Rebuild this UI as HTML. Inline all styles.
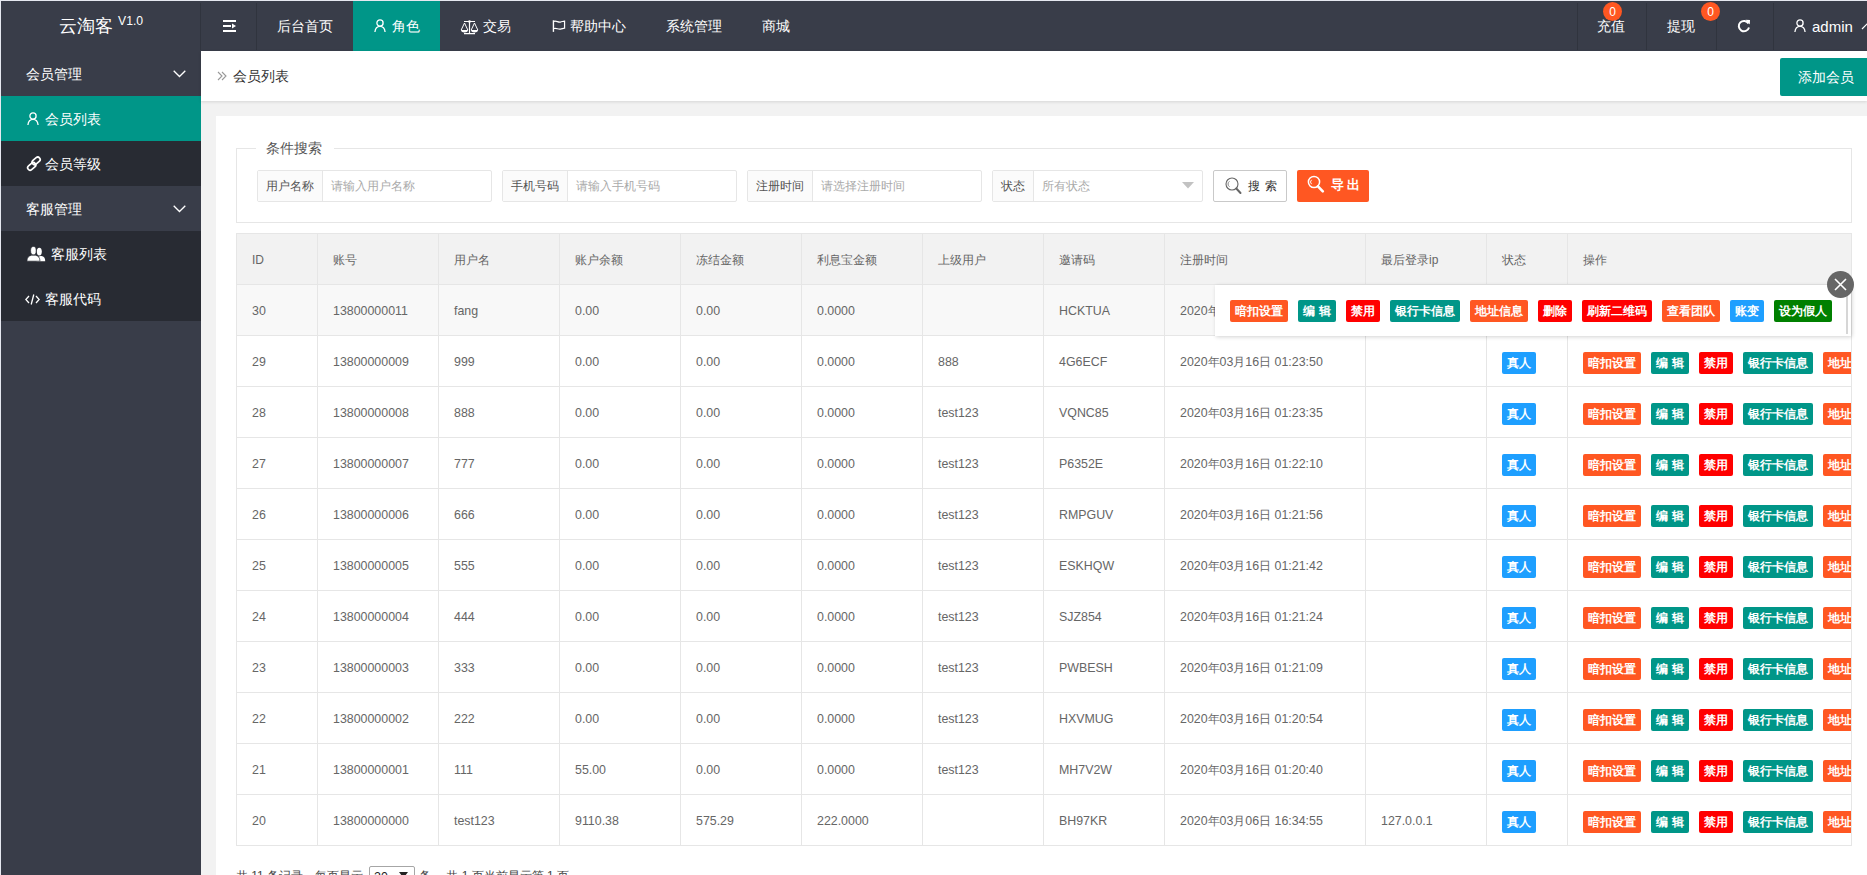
<!DOCTYPE html><html><head><meta charset="utf-8"><style>
*{margin:0;padding:0;box-sizing:border-box}
html,body{width:1867px;height:875px;overflow:hidden}
body{background:#e6e8f0;font-family:"Liberation Sans", sans-serif;position:relative}
.a{position:absolute}
svg{display:block}
.t{position:absolute;white-space:nowrap;line-height:1}
#hdr{left:1px;top:1px;width:1866px;height:50px;background:#393D49}
#side{left:1px;top:51px;width:200px;height:824px;background:#393D49}
#main{left:201px;top:51px;width:1666px;height:824px;background:#f2f2f2}
.sep{position:absolute;top:2px;width:1px;height:47px;background:#30343e}
.nav{color:#fff;font-size:14px}
.sideitem{position:absolute;left:0;width:200px;height:45px}
.btn{position:absolute;height:22px;line-height:22px;font-size:12px;font-weight:bold;color:#fff;border-radius:2px;text-align:center;white-space:nowrap}
.cell{position:absolute;font-size:12.4px;color:#666;white-space:nowrap;line-height:1}
</style></head><body><div id="hdr" class="a">
<div class="t" style="left:58px;top:16px;color:#fff;font-size:18px">云淘客</div>
<div class="t" style="left:117px;top:14px;color:#fff;font-size:12.2px">V1.0</div>
<div class="sep" style="left:199px"></div><div class="sep" style="left:255px"></div>
<svg class="a" style="left:221px;top:18px" width="16" height="14" viewBox="0 0 16 14"><rect x="1" y="1" width="13" height="2" fill="#fff"/><rect x="1" y="6" width="8" height="2" fill="#fff"/><path d="M10 4.5 L14 7 L10 9.5Z" fill="#fff"/><rect x="1" y="11" width="13" height="2" fill="#fff"/></svg>
<div class="t nav" style="left:276px;top:18px">后台首页</div>
<div class="a" style="left:352px;top:0;width:87px;height:50px;background:#009688"></div>
<div class="a" style="left:373px;top:18px"><svg width="12" height="13" viewBox="0 0 12 13"><circle cx="6" cy="4" r="3.1" fill="none" stroke="#fff" stroke-width="1.3"/><path d="M0.9 13 C1.3 9.3 3.3 7.4 6 7.4 C8.7 7.4 10.7 9.3 11.1 13" fill="none" stroke="#fff" stroke-width="1.3"/></svg></div>
<div class="t nav" style="left:391px;top:18px">角色</div>
<svg class="a" style="left:459px;top:19px" width="19" height="15" viewBox="0 0 19 15"><path d="M4 1.5 H15 M9.5 1.5 V13.6 M4 13.6 H15" stroke="#fff" stroke-width="1.2" fill="none"/><circle cx="9.5" cy="1.5" r="1.3" fill="#fff"/><path d="M4.5 3 L1.2 10 M4.5 3 L7.8 10 M14.5 3 L11.2 10 M14.5 3 L17.8 10" stroke="#fff" stroke-width="1" fill="none"/><path d="M1 10 A3.5 2.4 0 0 0 8 10 Z M11 10 A3.5 2.4 0 0 0 18 10 Z" fill="#fff"/></svg>
<div class="t nav" style="left:482px;top:18px">交易</div>
<svg class="a" style="left:550px;top:19px" width="16" height="13" viewBox="0 0 16 14"><path d="M2 0.3 V12.8" stroke="#fff" stroke-width="1.5"/><path d="M2.5 1.5 C5 0.5 7 2.8 9.5 2.2 C11.5 1.8 13 1.2 14 1.2 V8.8 C13 8.8 11.5 9.4 9.5 9.8 C7 10.3 5 8.2 2.5 9.2" stroke="#fff" stroke-width="1.3" fill="none"/></svg>
<div class="t nav" style="left:569px;top:18px">帮助中心</div>
<div class="t nav" style="left:665px;top:18px">系统管理</div>
<div class="t nav" style="left:761px;top:18px">商城</div>
<div class="sep" style="left:1576px"></div>
<div class="sep" style="left:1645px"></div>
<div class="sep" style="left:1715px"></div>
<div class="sep" style="left:1772px"></div>
<div class="t nav" style="left:1596px;top:18px">充值</div>
<div class="a" style="left:1602px;top:1px;width:19px;height:19px;border-radius:50%;background:#FF5722;color:#fff;font-size:12px;line-height:21px;text-align:center">0</div>
<div class="t nav" style="left:1666px;top:18px">提现</div>
<div class="a" style="left:1700px;top:1px;width:19px;height:19px;border-radius:50%;background:#FF5722;color:#fff;font-size:12px;line-height:21px;text-align:center">0</div>
<svg class="a" style="left:1736px;top:18px" width="14" height="14" viewBox="0 0 14 14"><path d="M11.5 4.5 A5.2 5.2 0 1 0 12 8.5" stroke="#fff" stroke-width="2" fill="none"/><path d="M8.5 0.8 L13 1 L12.8 5.5 Z" fill="#fff"/></svg>
<div class="a" style="left:1793px;top:18px"><svg width="12" height="13" viewBox="0 0 12 13"><circle cx="6" cy="4" r="3.1" fill="none" stroke="#fff" stroke-width="1.3"/><path d="M0.9 13 C1.3 9.3 3.3 7.4 6 7.4 C8.7 7.4 10.7 9.3 11.1 13" fill="none" stroke="#fff" stroke-width="1.3"/></svg></div>
<div class="t nav" style="left:1811px;top:18px;font-size:15px">admin</div>
<svg class="a" style="left:1860px;top:21px" width="12" height="8" viewBox="0 0 12 8"><path d="M1 7 L6 2 L11 7" stroke="#fff" stroke-width="1.2" fill="none"/></svg>
</div>
<div id="side" class="a">
<div class="sideitem" style="top:0"><div class="t nav" style="left:25px;top:16px">会员管理</div><div class="a" style="left:172px;top:19px"><svg width="13" height="8" viewBox="0 0 13 8"><path d="M0.7 0.7 L6.5 6.5 L12.3 0.7" stroke="#fff" stroke-width="1.3" fill="none"/></svg></div></div>
<div class="sideitem" style="top:45px;background:#009688"><div class="a" style="left:26px;top:16px"><svg width="12" height="13" viewBox="0 0 12 13"><circle cx="6" cy="4" r="3.1" fill="none" stroke="#fff" stroke-width="1.3"/><path d="M0.9 13 C1.3 9.3 3.3 7.4 6 7.4 C8.7 7.4 10.7 9.3 11.1 13" fill="none" stroke="#fff" stroke-width="1.3"/></svg></div><div class="t nav" style="left:44px;top:16px">会员列表</div></div>
<div class="sideitem" style="top:90px;background:#282B33"><div class="a" style="left:25px;top:105px;top:15px"><svg width="16" height="16" viewBox="0 0 16 16"><g transform="rotate(-40 10.1 4.9)"><rect x="5.6" y="2.5" width="9" height="4.8" rx="2.4" stroke="#fff" stroke-width="1.7" fill="none"/></g><g transform="rotate(-40 5.7 10.4)"><rect x="1.2" y="8" width="9" height="4.8" rx="2.4" stroke="#fff" stroke-width="1.7" fill="none"/></g></svg></div><div class="t nav" style="left:44px;top:16px">会员等级</div></div>
<div class="sideitem" style="top:135px"><div class="t nav" style="left:25px;top:16px">客服管理</div><div class="a" style="left:172px;top:19px"><svg width="13" height="8" viewBox="0 0 13 8"><path d="M0.7 0.7 L6.5 6.5 L12.3 0.7" stroke="#fff" stroke-width="1.3" fill="none"/></svg></div></div>
<div class="sideitem" style="top:180px;background:#282B33"><div class="a" style="left:25px;top:15px"><svg width="20" height="16" viewBox="0 0 20 16"><ellipse cx="13.3" cy="5.6" rx="2.5" ry="3.9" fill="#fff"/><path d="M10.5 15.2 C11 11.8 12.3 10.3 14.5 10 L15.5 10 C18 10.4 19.2 12 19.2 15.2Z" fill="#fff"/><ellipse cx="7.4" cy="4.7" rx="2.8" ry="4.2" stroke="#282B33" stroke-width="0.7" fill="#fff"/><path d="M0.9 15.2 C0.9 11.5 2.8 9.8 5.5 9.2 L9.5 9.2 C12.2 9.8 14 11.5 14 15.2Z" stroke="#282B33" stroke-width="0.7" fill="#fff"/></svg></div><div class="t nav" style="left:50px;top:16px">客服列表</div></div>
<div class="sideitem" style="top:225px;background:#282B33"><div class="a" style="left:24px;top:18px"><svg width="15" height="11" viewBox="0 0 15 11"><path d="M4 2 L0.8 5.5 L4 9 M11 2 L14.2 5.5 L11 9 M8.8 0.5 L6.2 10.5" stroke="#fff" stroke-width="1.3" fill="none"/></svg></div><div class="t nav" style="left:44px;top:16px">客服代码</div></div>
</div>
<div id="main" class="a">
<div class="a" style="left:0;top:0;width:1666px;height:50px;background:#fff;box-shadow:0 1px 3px rgba(0,0,0,.12)"></div>
<svg class="a" style="left:16px;top:20px" width="10" height="10" viewBox="0 0 10 10"><path d="M1 1 L5 5 L1 9 M5 1 L9 5 L5 9" stroke="#999" stroke-width="1.1" fill="none"/></svg>
<div class="t" style="left:32px;top:18px;font-size:14px;color:#333">会员列表</div>
<div class="a" style="left:1579px;top:7px;width:95px;height:38px;background:#009688;border-radius:2px"></div>
<div class="t" style="left:1597px;top:19px;font-size:14px;color:#fff">添加会员</div>
<div class="a" style="left:15px;top:65px;width:1670px;height:800px;background:#fff"></div>
</div>
<div class="a" style="left:236px;top:148px;width:1616px;height:75px;border:1px solid #e6e6e6"></div>
<div class="a" style="left:256px;top:140px;width:78px;height:16px;background:#fff"></div>
<div class="t" style="left:266px;top:141px;font-size:14px;color:#555">条件搜索</div>
<div class="a" style="left:257px;top:170px;width:235px;height:32px;border:1px solid #e6e6e6;border-radius:2px;background:#fff"></div><div class="a" style="left:258px;top:171px;width:65px;height:30px;background:#FBFBFB;border-right:1px solid #e6e6e6"></div><div class="t" style="left:266px;top:180px;font-size:12px;color:#555">用户名称</div><div class="t" style="left:331px;top:180px;font-size:12px;color:#aaa">请输入用户名称</div>
<div class="a" style="left:502px;top:170px;width:235px;height:32px;border:1px solid #e6e6e6;border-radius:2px;background:#fff"></div><div class="a" style="left:503px;top:171px;width:65px;height:30px;background:#FBFBFB;border-right:1px solid #e6e6e6"></div><div class="t" style="left:511px;top:180px;font-size:12px;color:#555">手机号码</div><div class="t" style="left:576px;top:180px;font-size:12px;color:#aaa">请输入手机号码</div>
<div class="a" style="left:747px;top:170px;width:235px;height:32px;border:1px solid #e6e6e6;border-radius:2px;background:#fff"></div><div class="a" style="left:748px;top:171px;width:65px;height:30px;background:#FBFBFB;border-right:1px solid #e6e6e6"></div><div class="t" style="left:756px;top:180px;font-size:12px;color:#555">注册时间</div><div class="t" style="left:821px;top:180px;font-size:12px;color:#aaa">请选择注册时间</div>
<div class="a" style="left:992px;top:170px;width:211px;height:32px;border:1px solid #e6e6e6;border-radius:2px;background:#fff"></div><div class="a" style="left:993px;top:171px;width:41px;height:30px;background:#FBFBFB;border-right:1px solid #e6e6e6"></div><div class="t" style="left:1001px;top:180px;font-size:12px;color:#555">状态</div><div class="t" style="left:1042px;top:180px;font-size:12px;color:#aaa">所有状态</div><svg class="a" style="left:1182px;top:182px" width="12" height="7" viewBox="0 0 12 7"><path d="M0 0 H12 L6 6.5Z" fill="#c2c2c2"/></svg>
<div class="a" style="left:1213px;top:170px;width:74px;height:32px;border:1px solid #C9C9C9;border-radius:2px;background:#fff"></div>
<svg class="a" style="left:1225px;top:177px" width="17" height="18" viewBox="0 0 17 18"><circle cx="7" cy="7" r="6" stroke="#666" stroke-width="1.1" fill="none"/><path d="M11.3 11.5 L15.5 16" stroke="#666" stroke-width="2" stroke-linecap="round"/><path d="M4.5 4.3 A3.2 3.2 0 0 0 4.5 9.7" stroke="#666" stroke-width="0.8" fill="none"/></svg>
<div class="t" style="left:1248px;top:180px;font-size:12px;color:#333;letter-spacing:5px">搜索</div>
<div class="a" style="left:1297px;top:170px;width:72px;height:32px;background:#FF5722;border-radius:2px"></div>
<svg class="a" style="left:1307px;top:175px" width="18" height="18" viewBox="0 0 18 18"><circle cx="7" cy="7" r="5.6" stroke="#fff" stroke-width="1.5" fill="none"/><path d="M11 11.3 L15.8 16.3" stroke="#fff" stroke-width="2.6" stroke-linecap="round"/><path d="M4.6 4.8 A3 3 0 0 0 4.6 9.2" stroke="#fff" stroke-width="0.9" fill="none"/></svg>
<div class="t" style="left:1331px;top:178px;font-size:13px;color:#fff;letter-spacing:3px;font-weight:bold">导出</div>
<div class="a" style="left:236px;top:233px;width:1616px;height:613px;overflow:hidden;border:1px solid #e6e6e6;border-bottom:0">
<div class="a" style="left:0;top:0;width:1616px;height:50px;background:#f2f2f2"></div>
<div class="a" style="left:0;top:51px;width:1616px;height:50px;background:#f8f8f8"></div>
<div class="a" style="left:0;top:50px;width:1616px;height:1px;background:#e6e6e6"></div>
<div class="a" style="left:0;top:101px;width:1616px;height:1px;background:#e6e6e6"></div>
<div class="a" style="left:0;top:152px;width:1616px;height:1px;background:#e6e6e6"></div>
<div class="a" style="left:0;top:203px;width:1616px;height:1px;background:#e6e6e6"></div>
<div class="a" style="left:0;top:254px;width:1616px;height:1px;background:#e6e6e6"></div>
<div class="a" style="left:0;top:305px;width:1616px;height:1px;background:#e6e6e6"></div>
<div class="a" style="left:0;top:356px;width:1616px;height:1px;background:#e6e6e6"></div>
<div class="a" style="left:0;top:407px;width:1616px;height:1px;background:#e6e6e6"></div>
<div class="a" style="left:0;top:458px;width:1616px;height:1px;background:#e6e6e6"></div>
<div class="a" style="left:0;top:509px;width:1616px;height:1px;background:#e6e6e6"></div>
<div class="a" style="left:0;top:560px;width:1616px;height:1px;background:#e6e6e6"></div>
<div class="a" style="left:0;top:611px;width:1616px;height:1px;background:#e6e6e6"></div>
<div class="a" style="left:80px;top:0;width:1px;height:612px;background:#e6e6e6"></div>
<div class="a" style="left:201px;top:0;width:1px;height:612px;background:#e6e6e6"></div>
<div class="a" style="left:322px;top:0;width:1px;height:612px;background:#e6e6e6"></div>
<div class="a" style="left:443px;top:0;width:1px;height:612px;background:#e6e6e6"></div>
<div class="a" style="left:564px;top:0;width:1px;height:612px;background:#e6e6e6"></div>
<div class="a" style="left:685px;top:0;width:1px;height:612px;background:#e6e6e6"></div>
<div class="a" style="left:806px;top:0;width:1px;height:612px;background:#e6e6e6"></div>
<div class="a" style="left:927px;top:0;width:1px;height:612px;background:#e6e6e6"></div>
<div class="a" style="left:1128px;top:0;width:1px;height:612px;background:#e6e6e6"></div>
<div class="a" style="left:1249px;top:0;width:1px;height:612px;background:#e6e6e6"></div>
<div class="a" style="left:1330px;top:0;width:1px;height:612px;background:#e6e6e6"></div>
<div class="cell" style="left:15px;top:20px;font-size:12px">ID</div>
<div class="cell" style="left:96px;top:20px;font-size:12px">账号</div>
<div class="cell" style="left:217px;top:20px;font-size:12px">用户名</div>
<div class="cell" style="left:338px;top:20px;font-size:12px">账户余额</div>
<div class="cell" style="left:459px;top:20px;font-size:12px">冻结金额</div>
<div class="cell" style="left:580px;top:20px;font-size:12px">利息宝金额</div>
<div class="cell" style="left:701px;top:20px;font-size:12px">上级用户</div>
<div class="cell" style="left:822px;top:20px;font-size:12px">邀请码</div>
<div class="cell" style="left:943px;top:20px;font-size:12px">注册时间</div>
<div class="cell" style="left:1144px;top:20px;font-size:12px">最后登录ip</div>
<div class="cell" style="left:1265px;top:20px;font-size:12px">状态</div>
<div class="cell" style="left:1346px;top:20px;font-size:12px">操作</div>
<div class="cell" style="left:15px;top:71px">30</div>
<div class="cell" style="left:96px;top:71px">13800000011</div>
<div class="cell" style="left:217px;top:71px">fang</div>
<div class="cell" style="left:338px;top:71px">0.00</div>
<div class="cell" style="left:459px;top:71px">0.00</div>
<div class="cell" style="left:580px;top:71px">0.0000</div>
<div class="cell" style="left:822px;top:71px">HCKTUA</div>
<div class="cell" style="left:943px;top:71px">2020年03月16日 01:23:55</div>
<div class="btn" style="left:1265px;top:67px;width:34px;background:#1E9FFF">真人</div>
<div class="btn" style="left:1346px;top:67px;width:58px;background:#FF5722">暗扣设置</div>
<div class="btn" style="left:1414px;top:67px;width:38px;background:#009688">编 辑</div>
<div class="btn" style="left:1462px;top:67px;width:34px;background:#FF0000">禁用</div>
<div class="btn" style="left:1506px;top:67px;width:70px;background:#009688">银行卡信息</div>
<div class="btn" style="left:1586px;top:67px;width:58px;background:#FF5722">地址信息</div>
<div class="cell" style="left:15px;top:122px">29</div>
<div class="cell" style="left:96px;top:122px">13800000009</div>
<div class="cell" style="left:217px;top:122px">999</div>
<div class="cell" style="left:338px;top:122px">0.00</div>
<div class="cell" style="left:459px;top:122px">0.00</div>
<div class="cell" style="left:580px;top:122px">0.0000</div>
<div class="cell" style="left:701px;top:122px">888</div>
<div class="cell" style="left:822px;top:122px">4G6ECF</div>
<div class="cell" style="left:943px;top:122px">2020年03月16日 01:23:50</div>
<div class="btn" style="left:1265px;top:118px;width:34px;background:#1E9FFF">真人</div>
<div class="btn" style="left:1346px;top:118px;width:58px;background:#FF5722">暗扣设置</div>
<div class="btn" style="left:1414px;top:118px;width:38px;background:#009688">编 辑</div>
<div class="btn" style="left:1462px;top:118px;width:34px;background:#FF0000">禁用</div>
<div class="btn" style="left:1506px;top:118px;width:70px;background:#009688">银行卡信息</div>
<div class="btn" style="left:1586px;top:118px;width:58px;background:#FF5722">地址信息</div>
<div class="cell" style="left:15px;top:173px">28</div>
<div class="cell" style="left:96px;top:173px">13800000008</div>
<div class="cell" style="left:217px;top:173px">888</div>
<div class="cell" style="left:338px;top:173px">0.00</div>
<div class="cell" style="left:459px;top:173px">0.00</div>
<div class="cell" style="left:580px;top:173px">0.0000</div>
<div class="cell" style="left:701px;top:173px">test123</div>
<div class="cell" style="left:822px;top:173px">VQNC85</div>
<div class="cell" style="left:943px;top:173px">2020年03月16日 01:23:35</div>
<div class="btn" style="left:1265px;top:169px;width:34px;background:#1E9FFF">真人</div>
<div class="btn" style="left:1346px;top:169px;width:58px;background:#FF5722">暗扣设置</div>
<div class="btn" style="left:1414px;top:169px;width:38px;background:#009688">编 辑</div>
<div class="btn" style="left:1462px;top:169px;width:34px;background:#FF0000">禁用</div>
<div class="btn" style="left:1506px;top:169px;width:70px;background:#009688">银行卡信息</div>
<div class="btn" style="left:1586px;top:169px;width:58px;background:#FF5722">地址信息</div>
<div class="cell" style="left:15px;top:224px">27</div>
<div class="cell" style="left:96px;top:224px">13800000007</div>
<div class="cell" style="left:217px;top:224px">777</div>
<div class="cell" style="left:338px;top:224px">0.00</div>
<div class="cell" style="left:459px;top:224px">0.00</div>
<div class="cell" style="left:580px;top:224px">0.0000</div>
<div class="cell" style="left:701px;top:224px">test123</div>
<div class="cell" style="left:822px;top:224px">P6352E</div>
<div class="cell" style="left:943px;top:224px">2020年03月16日 01:22:10</div>
<div class="btn" style="left:1265px;top:220px;width:34px;background:#1E9FFF">真人</div>
<div class="btn" style="left:1346px;top:220px;width:58px;background:#FF5722">暗扣设置</div>
<div class="btn" style="left:1414px;top:220px;width:38px;background:#009688">编 辑</div>
<div class="btn" style="left:1462px;top:220px;width:34px;background:#FF0000">禁用</div>
<div class="btn" style="left:1506px;top:220px;width:70px;background:#009688">银行卡信息</div>
<div class="btn" style="left:1586px;top:220px;width:58px;background:#FF5722">地址信息</div>
<div class="cell" style="left:15px;top:275px">26</div>
<div class="cell" style="left:96px;top:275px">13800000006</div>
<div class="cell" style="left:217px;top:275px">666</div>
<div class="cell" style="left:338px;top:275px">0.00</div>
<div class="cell" style="left:459px;top:275px">0.00</div>
<div class="cell" style="left:580px;top:275px">0.0000</div>
<div class="cell" style="left:701px;top:275px">test123</div>
<div class="cell" style="left:822px;top:275px">RMPGUV</div>
<div class="cell" style="left:943px;top:275px">2020年03月16日 01:21:56</div>
<div class="btn" style="left:1265px;top:271px;width:34px;background:#1E9FFF">真人</div>
<div class="btn" style="left:1346px;top:271px;width:58px;background:#FF5722">暗扣设置</div>
<div class="btn" style="left:1414px;top:271px;width:38px;background:#009688">编 辑</div>
<div class="btn" style="left:1462px;top:271px;width:34px;background:#FF0000">禁用</div>
<div class="btn" style="left:1506px;top:271px;width:70px;background:#009688">银行卡信息</div>
<div class="btn" style="left:1586px;top:271px;width:58px;background:#FF5722">地址信息</div>
<div class="cell" style="left:15px;top:326px">25</div>
<div class="cell" style="left:96px;top:326px">13800000005</div>
<div class="cell" style="left:217px;top:326px">555</div>
<div class="cell" style="left:338px;top:326px">0.00</div>
<div class="cell" style="left:459px;top:326px">0.00</div>
<div class="cell" style="left:580px;top:326px">0.0000</div>
<div class="cell" style="left:701px;top:326px">test123</div>
<div class="cell" style="left:822px;top:326px">ESKHQW</div>
<div class="cell" style="left:943px;top:326px">2020年03月16日 01:21:42</div>
<div class="btn" style="left:1265px;top:322px;width:34px;background:#1E9FFF">真人</div>
<div class="btn" style="left:1346px;top:322px;width:58px;background:#FF5722">暗扣设置</div>
<div class="btn" style="left:1414px;top:322px;width:38px;background:#009688">编 辑</div>
<div class="btn" style="left:1462px;top:322px;width:34px;background:#FF0000">禁用</div>
<div class="btn" style="left:1506px;top:322px;width:70px;background:#009688">银行卡信息</div>
<div class="btn" style="left:1586px;top:322px;width:58px;background:#FF5722">地址信息</div>
<div class="cell" style="left:15px;top:377px">24</div>
<div class="cell" style="left:96px;top:377px">13800000004</div>
<div class="cell" style="left:217px;top:377px">444</div>
<div class="cell" style="left:338px;top:377px">0.00</div>
<div class="cell" style="left:459px;top:377px">0.00</div>
<div class="cell" style="left:580px;top:377px">0.0000</div>
<div class="cell" style="left:701px;top:377px">test123</div>
<div class="cell" style="left:822px;top:377px">SJZ854</div>
<div class="cell" style="left:943px;top:377px">2020年03月16日 01:21:24</div>
<div class="btn" style="left:1265px;top:373px;width:34px;background:#1E9FFF">真人</div>
<div class="btn" style="left:1346px;top:373px;width:58px;background:#FF5722">暗扣设置</div>
<div class="btn" style="left:1414px;top:373px;width:38px;background:#009688">编 辑</div>
<div class="btn" style="left:1462px;top:373px;width:34px;background:#FF0000">禁用</div>
<div class="btn" style="left:1506px;top:373px;width:70px;background:#009688">银行卡信息</div>
<div class="btn" style="left:1586px;top:373px;width:58px;background:#FF5722">地址信息</div>
<div class="cell" style="left:15px;top:428px">23</div>
<div class="cell" style="left:96px;top:428px">13800000003</div>
<div class="cell" style="left:217px;top:428px">333</div>
<div class="cell" style="left:338px;top:428px">0.00</div>
<div class="cell" style="left:459px;top:428px">0.00</div>
<div class="cell" style="left:580px;top:428px">0.0000</div>
<div class="cell" style="left:701px;top:428px">test123</div>
<div class="cell" style="left:822px;top:428px">PWBESH</div>
<div class="cell" style="left:943px;top:428px">2020年03月16日 01:21:09</div>
<div class="btn" style="left:1265px;top:424px;width:34px;background:#1E9FFF">真人</div>
<div class="btn" style="left:1346px;top:424px;width:58px;background:#FF5722">暗扣设置</div>
<div class="btn" style="left:1414px;top:424px;width:38px;background:#009688">编 辑</div>
<div class="btn" style="left:1462px;top:424px;width:34px;background:#FF0000">禁用</div>
<div class="btn" style="left:1506px;top:424px;width:70px;background:#009688">银行卡信息</div>
<div class="btn" style="left:1586px;top:424px;width:58px;background:#FF5722">地址信息</div>
<div class="cell" style="left:15px;top:479px">22</div>
<div class="cell" style="left:96px;top:479px">13800000002</div>
<div class="cell" style="left:217px;top:479px">222</div>
<div class="cell" style="left:338px;top:479px">0.00</div>
<div class="cell" style="left:459px;top:479px">0.00</div>
<div class="cell" style="left:580px;top:479px">0.0000</div>
<div class="cell" style="left:701px;top:479px">test123</div>
<div class="cell" style="left:822px;top:479px">HXVMUG</div>
<div class="cell" style="left:943px;top:479px">2020年03月16日 01:20:54</div>
<div class="btn" style="left:1265px;top:475px;width:34px;background:#1E9FFF">真人</div>
<div class="btn" style="left:1346px;top:475px;width:58px;background:#FF5722">暗扣设置</div>
<div class="btn" style="left:1414px;top:475px;width:38px;background:#009688">编 辑</div>
<div class="btn" style="left:1462px;top:475px;width:34px;background:#FF0000">禁用</div>
<div class="btn" style="left:1506px;top:475px;width:70px;background:#009688">银行卡信息</div>
<div class="btn" style="left:1586px;top:475px;width:58px;background:#FF5722">地址信息</div>
<div class="cell" style="left:15px;top:530px">21</div>
<div class="cell" style="left:96px;top:530px">13800000001</div>
<div class="cell" style="left:217px;top:530px">111</div>
<div class="cell" style="left:338px;top:530px">55.00</div>
<div class="cell" style="left:459px;top:530px">0.00</div>
<div class="cell" style="left:580px;top:530px">0.0000</div>
<div class="cell" style="left:701px;top:530px">test123</div>
<div class="cell" style="left:822px;top:530px">MH7V2W</div>
<div class="cell" style="left:943px;top:530px">2020年03月16日 01:20:40</div>
<div class="btn" style="left:1265px;top:526px;width:34px;background:#1E9FFF">真人</div>
<div class="btn" style="left:1346px;top:526px;width:58px;background:#FF5722">暗扣设置</div>
<div class="btn" style="left:1414px;top:526px;width:38px;background:#009688">编 辑</div>
<div class="btn" style="left:1462px;top:526px;width:34px;background:#FF0000">禁用</div>
<div class="btn" style="left:1506px;top:526px;width:70px;background:#009688">银行卡信息</div>
<div class="btn" style="left:1586px;top:526px;width:58px;background:#FF5722">地址信息</div>
<div class="cell" style="left:15px;top:581px">20</div>
<div class="cell" style="left:96px;top:581px">13800000000</div>
<div class="cell" style="left:217px;top:581px">test123</div>
<div class="cell" style="left:338px;top:581px">9110.38</div>
<div class="cell" style="left:459px;top:581px">575.29</div>
<div class="cell" style="left:580px;top:581px">222.0000</div>
<div class="cell" style="left:822px;top:581px">BH97KR</div>
<div class="cell" style="left:943px;top:581px">2020年03月06日 16:34:55</div>
<div class="cell" style="left:1144px;top:581px">127.0.0.1</div>
<div class="btn" style="left:1265px;top:577px;width:34px;background:#1E9FFF">真人</div>
<div class="btn" style="left:1346px;top:577px;width:58px;background:#FF5722">暗扣设置</div>
<div class="btn" style="left:1414px;top:577px;width:38px;background:#009688">编 辑</div>
<div class="btn" style="left:1462px;top:577px;width:34px;background:#FF0000">禁用</div>
<div class="btn" style="left:1506px;top:577px;width:70px;background:#009688">银行卡信息</div>
<div class="btn" style="left:1586px;top:577px;width:58px;background:#FF5722">地址信息</div>
</div>
<div class="a" style="left:1215px;top:285px;width:636px;height:51px;background:#fff;box-shadow:1px 1px 4px rgba(0,0,0,.18)"></div>
<div class="btn" style="left:1230px;top:300px;width:58px;background:#FF5722">暗扣设置</div>
<div class="btn" style="left:1298px;top:300px;width:38px;background:#009688">编 辑</div>
<div class="btn" style="left:1346px;top:300px;width:34px;background:#FF0000">禁用</div>
<div class="btn" style="left:1390px;top:300px;width:70px;background:#009688">银行卡信息</div>
<div class="btn" style="left:1470px;top:300px;width:58px;background:#FF5722">地址信息</div>
<div class="btn" style="left:1538px;top:300px;width:34px;background:#FF0000">删除</div>
<div class="btn" style="left:1582px;top:300px;width:70px;background:#FF0000">刷新二维码</div>
<div class="btn" style="left:1662px;top:300px;width:58px;background:#FF5722">查看团队</div>
<div class="btn" style="left:1730px;top:300px;width:34px;background:#1E9FFF">账变</div>
<div class="btn" style="left:1774px;top:300px;width:58px;background:#008000">设为假人</div>
<div class="a" style="left:1846px;top:290px;width:2px;height:44px;background:#d6d6d6"></div>
<div class="a" style="left:1827px;top:271px;width:27px;height:27px;border-radius:50%;background:#666"></div>
<svg class="a" style="left:1834px;top:278px" width="13" height="13" viewBox="0 0 13 13"><path d="M1 1 L12 12 M12 1 L1 12" stroke="#fff" stroke-width="1.6"/></svg>
<div class="t" style="left:236px;top:870px;font-size:12px;color:#444">共 11 条记录，每页显示</div>
<div class="a" style="left:369px;top:866px;width:46px;height:22px;border:1px solid #a6a6a6;border-radius:2px;background:#fff"></div>
<div class="t" style="left:374px;top:871px;font-size:12.4px;color:#222">20</div>
<svg class="a" style="left:399px;top:872px" width="9" height="6" viewBox="0 0 9 6"><path d="M0 0 H9 L4.5 6Z" fill="#222"/></svg>
<div class="t" style="left:419px;top:870px;font-size:12px;color:#444">条， 共 1 页当前显示第 1 页</div></body></html>
